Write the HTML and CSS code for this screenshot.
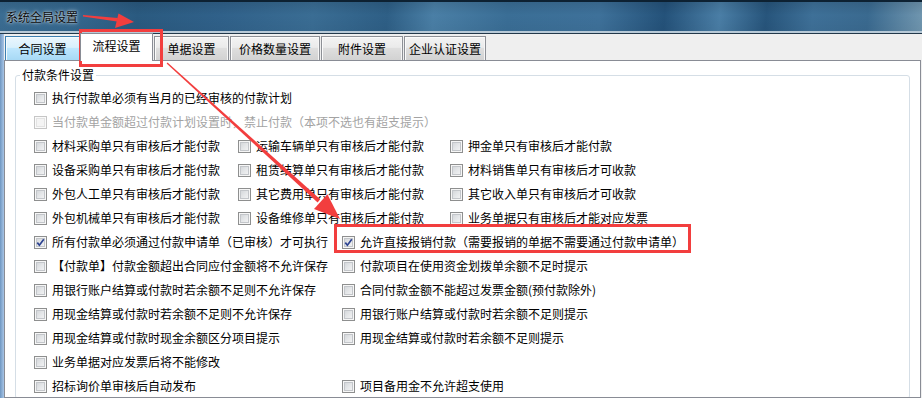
FILE: index.html
```html
<!DOCTYPE html>
<html lang="zh-CN">
<head>
<meta charset="utf-8">
<title>系统全局设置</title>
<link rel="stylesheet" href="styles.css">
</head>
<body>
<div class="window">
  <div class="titlebar"><span class="title">系统全局设置</span></div>
  <div class="frame">
    <div class="edge"></div>
    <div class="main">
      <div class="tabs">
        <div class="tab hover t1">合同设置</div>
        <div class="tab active t2">流程设置</div>
        <div class="tab t3">单据设置</div>
        <div class="tab t4">价格数量设置</div>
        <div class="tab t5">附件设置</div>
        <div class="tab t6">企业认证设置</div>
      </div>
      <div class="panel">
        <fieldset class="group">
          <legend>付款条件设置</legend>
          <div class="row">
            <label class="item"><span class="cb"></span>执行付款单必须有当月的已经审核的付款计划</label>
          </div>
          <div class="row">
            <label class="item disabled"><span class="cb"></span>当付款单金额超过付款计划设置时，禁止付款（本项不选也有超支提示）</label>
          </div>
          <div class="row three">
            <label class="item"><span class="cb"></span>材料采购单只有审核后才能付款</label>
            <label class="item"><span class="cb"></span>运输车辆单只有审核后才能付款</label>
            <label class="item"><span class="cb"></span>押金单只有审核后才能付款</label>
          </div>
          <div class="row three">
            <label class="item"><span class="cb"></span>设备采购单只有审核后才能付款</label>
            <label class="item"><span class="cb"></span>租赁结算单只有审核后才能付款</label>
            <label class="item"><span class="cb"></span>材料销售单只有审核后才可收款</label>
          </div>
          <div class="row three">
            <label class="item"><span class="cb"></span>外包人工单只有审核后才能付款</label>
            <label class="item"><span class="cb"></span>其它费用单只有审核后才能付款</label>
            <label class="item"><span class="cb"></span>其它收入单只有审核后才可收款</label>
          </div>
          <div class="row three">
            <label class="item"><span class="cb"></span>外包机械单只有审核后才能付款</label>
            <label class="item"><span class="cb"></span>设备维修单只有审核后才能付款</label>
            <label class="item"><span class="cb"></span>业务单据只有审核后才能对应发票</label>
          </div>
          <div class="row two">
            <label class="item"><span class="cb checked"><svg width="9" height="9" viewBox="0 0 9 9"><path d="M1.3 4.6 L3.4 7.2 L7.8 1.2" fill="none" stroke="#2d4391" stroke-width="1.7"/></svg></span>所有付款单必须通过付款申请单（已审核）才可执行</label>
            <label class="item"><span class="cb checked"><svg width="9" height="9" viewBox="0 0 9 9"><path d="M1.3 4.6 L3.4 7.2 L7.8 1.2" fill="none" stroke="#2d4391" stroke-width="1.7"/></svg></span>允许直接报销付款（需要报销的单据不需要通过付款申请单）</label>
          </div>
          <div class="row two">
            <label class="item"><span class="cb"></span>【付款单】付款金额超出合同应付金额将不允许保存</label>
            <label class="item"><span class="cb"></span>付款项目在使用资金划拨单余额不足时提示</label>
          </div>
          <div class="row two">
            <label class="item"><span class="cb"></span>用银行账户结算或付款时若余额不足则不允许保存</label>
            <label class="item"><span class="cb"></span>合同付款金额不能超过发票金额(预付款除外)</label>
          </div>
          <div class="row two">
            <label class="item"><span class="cb"></span>用现金结算或付款时若余额不足则不允许保存</label>
            <label class="item"><span class="cb"></span>用银行账户结算或付款时若余额不足则提示</label>
          </div>
          <div class="row two">
            <label class="item"><span class="cb"></span>用现金结算或付款时现金余额区分项目提示</label>
            <label class="item"><span class="cb"></span>用现金结算或付款时若余额不足则提示</label>
          </div>
          <div class="row two">
            <label class="item"><span class="cb"></span>业务单据对应发票后将不能修改</label>
          </div>
          <div class="row two">
            <label class="item"><span class="cb"></span>招标询价单审核后自动发布</label>
            <label class="item"><span class="cb"></span>项目备用金不允许超支使用</label>
          </div>
        </fieldset>
      </div>
    </div>
  </div>
  <svg class="annot" width="922" height="398" viewBox="0 0 922 398">
    <g fill="#f23e3e">
      <polygon points="83,15 118,18 117,21.5 83,16.6"/>
      <polygon points="118.5,13.5 134,22 115,28"/>
      <polygon points="167.5,62.4 320.2,199.2 317.6,202.4 166.6,63.6"/>
      <polygon points="340,219 314,209 327.4,194.2"/>
    </g>
    <g fill="none" stroke="#f23e3e" stroke-width="3">
      <rect x="80.5" y="30.5" width="81" height="35"/>
      <rect x="335.5" y="225.5" width="354" height="26"/>
    </g>
  </svg>
</div>
</body>
</html>
```

FILE: styles.css
```css
html, body {
  margin: 0;
  padding: 0;
}

body {
  font-family: "Noto Sans CJK SC", "Liberation Sans", sans-serif;
  font-size: 12px;
  color: #000;
  background: #efefef;
  overflow: hidden;
}

.window {
  position: relative;
  width: 922px;
  height: 398px;
  display: flex;
  flex-direction: column;
  background: #efefef;
  overflow: hidden;
}

.titlebar {
  height: 28px;
  flex: none;
  border-top: 2px solid #0d2132;
  border-bottom: 2px solid #b7c9d7;
  box-shadow: 0 1px 0 #22384a;
  background:
    linear-gradient(180deg, rgba(0, 0, 0, 0.10) 0, rgba(0, 0, 0, 0) 45%, rgba(0, 0, 0, 0.04) 100%),
    linear-gradient(95deg, #3b6d93 0, #35688f 8%, #2a5a80 15%, #30618a 24%, #3a6d94 34%, #2e5f86 42%, #4a7fa6 47%, #3a6e96 55%, #3e719a 65%, #24527a 72%, #4a7ea6 78%, #27557c 83%, #3e7098 88%, #3a6a90 94%, #7197b0 100%);
  display: flex;
  align-items: center;
  padding-left: 6px;
  padding-top: 1px;
  box-sizing: content-box;
}

.title {
  line-height: 14px;
  color: #0b0b0b;
  text-shadow: 0 0 4px rgba(255, 255, 255, 0.75), 0 0 2px rgba(255, 255, 255, 0.6);
}

.frame {
  flex: 1;
  display: flex;
  min-height: 0;
  margin-top: 1px;
}

.edge {
  width: 4px;
  flex: none;
  background: linear-gradient(90deg, #6f97c2, #a8c5e6);
}

.main {
  flex: 1;
  display: flex;
  flex-direction: column;
  min-width: 0;
}

.tabs {
  height: 26px;
  flex: none;
  display: flex;
  align-items: flex-end;
  padding-left: 1px;
}

.tab {
  height: 24px;
  box-sizing: border-box;
  border: 1px solid #8d9096;
  border-bottom: none;
  background: linear-gradient(180deg, #f3f3f3 0, #ebebeb 45%, #dedede 50%, #d2d2d2 100%);
  box-shadow: inset 1px 1px 0 #fbfbfb, inset -1px 0 0 #f6f6f6;
  display: flex;
  align-items: center;
  justify-content: center;
  padding-top: 1px;
  margin-left: 1px;
  line-height: 14px;
  white-space: nowrap;
}

.tab.hover {
  background: linear-gradient(180deg, #eaf6fd 0, #d9f0fc 45%, #bee6fd 50%, #a7d9f5 100%);
  border-color: #3c7fb1;
  box-shadow: inset 1px 1px 0 #f4fbfe;
}

.tab.active {
  height: 28px;
  margin-bottom: -1px;
  background: #fff;
  border-color: #898c95;
  box-shadow: none;
  padding-top: 0;
  padding-bottom: 4px;
  position: relative;
  z-index: 2;
}

.t1 { width: 75px; margin-left: 0; }
.t2 { width: 73px; margin-left: 0; }
.t3 { width: 75px; }
.t4 { width: 90px; }
.t5 { width: 82px; }
.t6 { width: 82px; }

.panel {
  flex: 1;
  background: #fff;
  border: 1px solid #898c95;
  margin-right: 1px;
  min-height: 0;
  overflow: hidden;
  display: flex;
  flex-direction: column;
}

.group {
  margin: 7px 10px 0 10px;
  padding: 4px 0 0 18px;
  border: 1px solid #d5dee6;
  border-radius: 3px;
  flex: 1;
  min-width: 0;
}

.group legend {
  padding: 0 2px;
  margin-left: -14px;
  line-height: 14px;
}

.row {
  height: 24px;
  display: grid;
  align-items: center;
  grid-template-columns: auto;
}

.row.three {
  grid-template-columns: 204px 212px auto;
}

.row.two {
  grid-template-columns: 308px auto;
}

.item {
  display: flex;
  align-items: center;
  gap: 5px;
  white-space: nowrap;
  line-height: 14px;
}

.cb {
  width: 13px;
  height: 13px;
  flex: none;
  box-sizing: border-box;
  border: 1px solid #8e8f8f;
  background: linear-gradient(135deg, #cdd0d4 0, #e4e6e8 50%, #f8f8f8 100%);
  box-shadow: inset 0 0 0 1px #f6f6f6, inset 0 0 0 2px #c3c6ca;
  display: flex;
  align-items: center;
  justify-content: center;
}

.cb svg {
  display: block;
}

.item.disabled {
  color: #a3a3a3;
}

.item.disabled .cb {
  border-color: #c6c6c6;
  background: #f4f4f4;
  box-shadow: inset 0 0 0 1px #fafafa, inset 0 0 0 2px #e3e3e3;
}

.annot {
  position: absolute;
  left: 0;
  top: 0;
  pointer-events: none;
}
```
